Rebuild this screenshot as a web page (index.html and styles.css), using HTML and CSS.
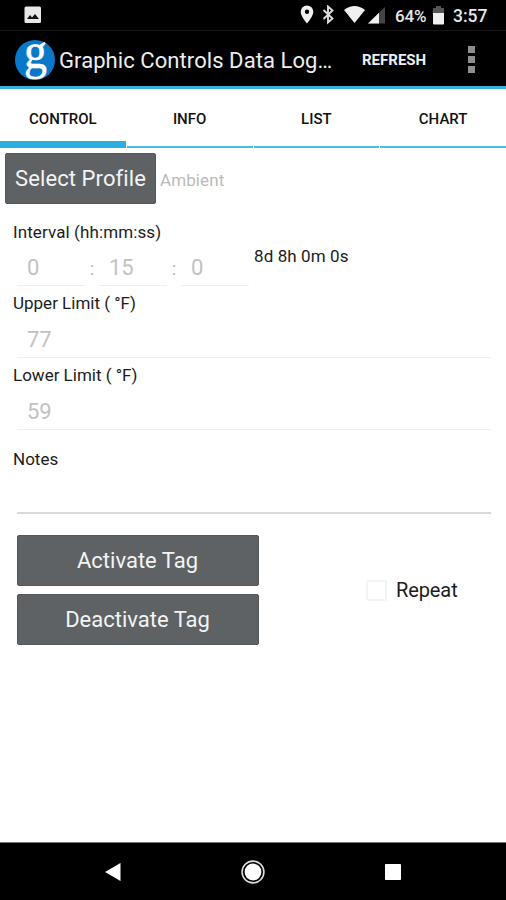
FILE: index.html
```html
<!DOCTYPE html>
<html lang="en">
<head>
<meta charset="utf-8">
<title>Graphic Controls Data Logger</title>
<link rel="stylesheet" href="styles.css">
</head>
<body>
<header class="status">
  <svg class="s-photo" width="18" height="18" viewBox="0 0 18 18"><rect x=".5" y=".5" width="16.500" height="16.500" rx="1.500" fill="#e8e8e8"/><path d="M3 13l3-4 2 2.500L11 8l4 5z" fill="#111"/></svg>
  <svg class="s-icons" width="86" height="20" viewBox="0 0 86 20">
    <path fill="#f0f0f0" fill-rule="evenodd" d="M7 .5a6.300 6.300 0 0 0-6.300 6.300C.7 11.500 7 18.500 7 18.500s6.300-7 6.300-11.700A6.300 6.300 0 0 0 7 .5zm0 4a2.200 2.200 0 1 1 0 4.400 2.200 2.200 0 0 1 0-4.400z"/>
    <path d="M23.500 5l9 8.500-4.500 4V1.500l4.500 4-9 8.500" fill="none" stroke="#ddd" stroke-width="1.900"/>
    <path d="M44 5q10.500-8 21 0L54.500 18z" fill="#f0f0f0"/>
    <path d="M68 18.500L85 2v16.500z" fill="#444"/><path d="M68 18.500L79 7.800v10.700z" fill="#f0f0f0"/>
  </svg>
  <span class="percent">64%</span>
  <svg class="s-battery" width="11" height="19" viewBox="0 0 11 19"><path d="M3 0h5v2h3v6H0V2h3z" fill="#555"/><path d="M0 7h11v10.500q0 1-1 1H1q-1 0-1-1z" fill="#f0f0f0"/></svg>
  <span class="clock">3:57</span>
</header>
<div class="appbar">
  <div class="logo"><svg width="40" height="40" viewBox="0 0 40 40"><circle cx="20" cy="20" r="20" fill="#0a78c8"/><text class="logo-letter" transform="translate(20.500 28) scale(.92 1)" text-anchor="middle">g</text></svg></div>
  <h1 class="title">Graphic Controls Data Log…</h1>
  <span class="refresh">REFRESH</span>
  <div class="more"><i></i><i></i><i></i></div>
</div>
<nav class="tabs">
  <div class="tab active"><span>CONTROL</span></div>
  <div class="tab"><span>INFO</span></div>
  <div class="tab"><span>LIST</span></div>
  <div class="tab"><span>CHART</span></div>
</nav>
<main class="content">
  <div class="profile"><button class="btn select"><span>Select Profile</span></button><span class="ambient">Ambient</span></div>
  <div class="interval">
    <div class="interval-left">
      <div class="label l-interval"><span>Interval (hh:mm:ss)</span></div>
      <div class="times"><span class="field">0</span><span class="colon">:</span><span class="field">15</span><span class="colon">:</span><span class="field">0</span></div>
    </div>
    <div class="duration"><span>8d 8h 0m 0s</span></div>
  </div>
  <div class="label"><span>Upper Limit ( °F)</span></div>
  <div class="field wide">77</div>
  <div class="label second"><span>Lower Limit ( °F)</span></div>
  <div class="field wide">59</div>
  <div class="label notes"><span>Notes</span></div>
  <div class="notes-field"></div>
  <div class="actions">
    <div class="buttons"><button class="btn"><span>Activate Tag</span></button><button class="btn"><span>Deactivate Tag</span></button></div>
    <div class="repeat"><i class="box"></i><span>Repeat</span></div>
  </div>
</main>
<footer class="navbar">
  <svg width="16" height="18" viewBox="0 0 16 18"><path d="M15.500 0v18L0 9z" fill="#fff"/></svg>
  <svg width="24" height="24" viewBox="0 0 24 24"><circle cx="12" cy="12" r="10.900" fill="none" stroke="#ddd" stroke-width="1.600"/><circle cx="12" cy="12" r="8.400" fill="#fff"/></svg>
  <svg width="16" height="16" viewBox="0 0 16 16"><rect width="16" height="16" rx=".8" fill="#fff"/></svg>
</footer>
</body>
</html>
```
FILE: styles.css
```css
* { box-sizing: border-box; }
body { margin: 0; width: 506px; height: 900px; background: #fff; color: #1c1c1c; font-family: Roboto, "Liberation Sans", sans-serif; display: flex; flex-direction: column; overflow: hidden; white-space: nowrap; }
svg { display: block; flex: none; }
.status { height: 31px; background: #000; color: #e8e8e8; display: flex; align-items: center; border-bottom: 1px solid #161616; flex: none; }
.s-photo { margin-left: 24px; }
.s-icons { margin-left: 258px; }
.percent { margin: 1px 0 0 9px; width: 38px; font-size: 17px; font-weight: 500; letter-spacing: -.1px; }
.s-battery { margin-top: 1px; }
.clock { margin-left: 9px; margin-top: 1px; font-size: 17.5px; font-weight: 500; }
.appbar { height: 58px; background: #000; border-bottom: 3px solid #35b0dc; display: flex; align-items: center; color: #eee; flex: none; padding-left: 15px; }
.logo { flex: none; margin-top: 2px; }
.logo-letter { font: 50px "Liberation Serif", serif; fill: #fff; stroke: #fff; stroke-width: .5px; }
.title { margin: 3px 0 0 4px; width: 303px; font-size: 22px; font-weight: 400; letter-spacing: .07px; }
.refresh { font-size: 15px; font-weight: 700; width: 106px; margin-top: 2px; }
.more { display: flex; flex-direction: column; gap: 3px; margin-top: 2px; }
.more i { width: 7px; height: 7px; background: #8d8d8d; }
.tabs { height: 59px; display: grid; grid-template-columns: repeat(4, 1fr); column-gap: 1px; flex: none; }
.tab { display: flex; align-items: center; justify-content: center; border-bottom: 2px solid #4ebbe0; font-size: 15px; font-weight: 500; padding-top: 3px; color: #111; }
.tab.active { border-bottom: 7px solid #29afe0; padding-top: 8px; }
.content { flex: 1; }
.profile { display: flex; align-items: center; padding: 5px 0 0 5px; }
.btn { font: 400 22px/26px Roboto, sans-serif; color: #f2f4f5; background: #5e6264; border: 1px solid #54585a; border-radius: 2px; height: 51px; padding: 0; display: block; }
.buttons .btn { padding-top: 1px; padding-right: 1px; }
.select { width: 151px; letter-spacing: .1px; }
.ambient { color: #bbb; font-size: 17px; margin: 2px 0 0 4px; letter-spacing: .1px; }
.interval { display: flex; height: 89px; padding-top: 18px; }
.interval-left { width: 254px; }
.label { font-size: 17px; line-height: 20px; height: 20px; padding-left: 13px; }
.l-interval { letter-spacing: .1px; }
.times { display: flex; margin-top: 9px; padding-left: 17px; }
.field { display: block; width: 68px; height: 44px; font-size: 22px; line-height: 32px; color: #c2c2c2; border-bottom: 1px solid #eee; padding: 11px 0 0 10px; }
.times .field { height: 35px; padding-top: 1px; }
.colon { width: 14px; font-size: 19px; line-height: 36px; color: #bbb; text-align: center; }
.duration { font-size: 17px; line-height: 20px; padding-top: 24px; letter-spacing: .1px; }
.wide { width: 474px; margin-left: 17px; height: 45px; }
.second { margin-top: 7px; }
.notes { margin-top: 19px; }
.notes-field { height: 45px; width: 474px; margin-left: 17px; border-bottom: 2px solid #d9d9d9; }
.actions { display: flex; padding: 21px 0 0 17px; }
.buttons { display: flex; flex-direction: column; gap: 8px; width: 242px; }
.repeat { margin: 43px 0 0 107px; height: 24px; display: flex; align-items: center; font-size: 20px; letter-spacing: -.1px; }
.box { width: 21px; height: 21px; border: 2px solid #f4f4f4; border-radius: 2px; margin-right: 9px; }
.navbar { height: 58px; background: #000; border-top: 1px solid #777; display: flex; align-items: center; justify-content: space-between; padding: 0 105px; flex: none; }
```
